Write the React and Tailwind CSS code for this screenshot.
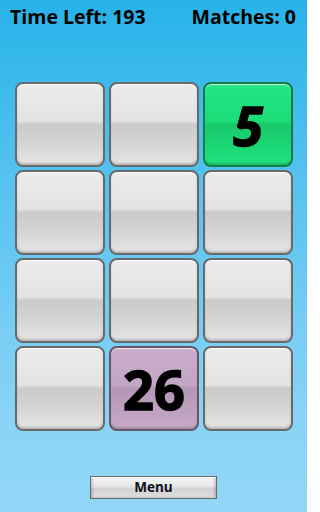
import React from "react";

const grayTile =
  "bg-[linear-gradient(to_bottom,#ececec_0%,#e2e2e2_46%,#cbcbcb_50%,#d3d3d3_70%,#e4e4e4_100%)] border-[#696969]";
const greenTile =
  "bg-[linear-gradient(to_bottom,#22e683_0%,#1cdc78_46%,#17c86b_50%,#1bd473_72%,#20e27f_100%)] border-[#0f7f43]";
const purpleTile =
  "bg-[linear-gradient(to_bottom,#c9adca_0%,#c2a6c3_46%,#b497b5_50%,#bb9fbc_72%,#c6aac7_100%)] border-[#665666]";

function Tile({ kind = "gray", children, italic }) {
  const cls = kind === "green" ? greenTile : kind === "purple" ? purpleTile : grayTile;
  return (
    <div
      className={`relative w-[90px] h-[85px] rounded-[8px] border-2 ${cls} shadow-[inset_0_1px_1px_rgba(255,255,255,0.8),inset_0_-2px_2px_rgba(0,0,0,0.18)] flex items-center justify-center`}
    >
      {children && (
        <span
          className={`text-[54px] leading-none font-bold text-black [-webkit-text-stroke:1.5px_black] ${italic ? "italic" : "not-italic"}`}
          style={{ fontFamily: '"Open Sans", "Noto Sans", sans-serif' }}
        >
          {children}
        </span>
      )}
    </div>
  );
}

export default function App() {
  const tiles = [
    { k: "gray" }, { k: "gray" }, { k: "green", n: "5", i: true },
    { k: "gray" }, { k: "gray" }, { k: "gray" },
    { k: "gray" }, { k: "gray" }, { k: "gray" },
    { k: "gray" }, { k: "purple", n: "26" }, { k: "gray" },
  ];
  return (
    <div
      className="w-[307px] h-[512px] flex flex-col bg-[linear-gradient(to_bottom,#27b3e9_0%,#5cc4f0_40%,#88d3f6_80%,#92d7f7_100%)]"
      style={{ fontFamily: '"Open Sans", "Noto Sans", sans-serif' }}
    >
      <div className="flex justify-between pl-[10px] pr-[11px] pt-[4px] text-[19.5px] font-bold text-black leading-[26px]">
        <span>Time Left: 193</span>
        <span>Matches: 0</span>
      </div>
      <div className="grid grid-cols-[90px_90px_90px] gap-x-[4px] gap-y-[3px] pl-[15px] mt-[52px]">
        {tiles.map((t, idx) => (
          <Tile key={idx} kind={t.k} italic={t.i}>
            {t.n}
          </Tile>
        ))}
      </div>
      <div className="flex justify-center mt-[45px]">
        <button className="w-[127px] h-[23px] border border-[#6a6a6a] bg-[linear-gradient(to_bottom,#f6f6f6_0%,#e6e6e6_45%,#d2d2d2_55%,#dedede_100%)] shadow-[inset_0_1px_0_#fff,inset_2px_0_2px_rgba(0,0,0,0.15),inset_-2px_0_2px_rgba(0,0,0,0.15)] flex items-center justify-center text-[13.5px] font-bold text-[#0c1020] leading-none">
          Menu
        </button>
      </div>
    </div>
  );
}
